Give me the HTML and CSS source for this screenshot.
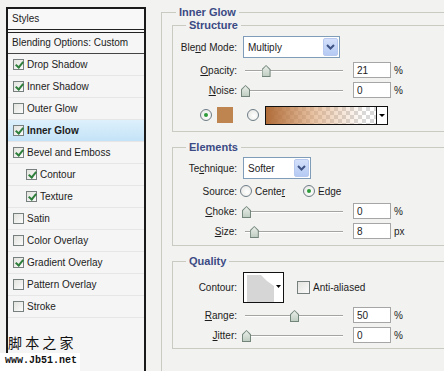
FILE: index.html
```html
<!DOCTYPE html>
<html lang="en">
<head>
    <meta charset="UTF-8">
    <meta name="viewport" content="width=device-width, initial-scale=1.0">
    <title>Layer Style - Inner Glow</title>
    <link rel="stylesheet" href="styles.css">
</head>
<body>

<div class="window">
    <!-- danh sach style ben trai -->
    <div class="styles-panel">
        <div class="panel-head">Styles</div>
        <div class="panel-row">Blending Options: Custom</div>
        <ul class="style-list">
            <li class="style-item"><span class="check on"></span>Drop Shadow</li>
            <li class="style-item"><span class="check on"></span>Inner Shadow</li>
            <li class="style-item"><span class="check"></span>Outer Glow</li>
            <li class="style-item selected"><span class="check on"></span>Inner Glow</li>
            <li class="style-item"><span class="check on"></span>Bevel and Emboss</li>
            <li class="style-item sub"><span class="check on"></span>Contour</li>
            <li class="style-item sub"><span class="check on"></span>Texture</li>
            <li class="style-item"><span class="check"></span>Satin</li>
            <li class="style-item"><span class="check"></span>Color Overlay</li>
            <li class="style-item"><span class="check on"></span>Gradient Overlay</li>
            <li class="style-item"><span class="check"></span>Pattern Overlay</li>
            <li class="style-item"><span class="check"></span>Stroke</li>
        </ul>
    </div>

    <!-- bang tuy chon Inner Glow -->
    <div class="options">
        <fieldset class="group">
            <legend class="group-title">Inner Glow</legend>

            <fieldset class="section structure">
                <legend class="section-title">Structure</legend>
                <div class="field field-tall">
                    <label class="field-label">Ble<u>n</u>d Mode:</label>
                    <div class="select select-blend">
                        <span class="select-value">Multiply</span>
                        <span class="select-btn"><svg width="9" height="6" viewBox="0 0 9 6"><path d="M1 1 L4.5 4.5 L8 1" fill="none" stroke="#3e5486" stroke-width="2"/></svg></span>
                    </div>
                </div>
                <div class="field">
                    <label class="field-label"><u>O</u>pacity:</label>
                    <div class="slider"><span class="thumb" style="left: 21%"></span></div>
                    <input class="num" type="text" value="21">
                    <span class="unit">%</span>
                </div>
                <div class="field">
                    <label class="field-label"><u>N</u>oise:</label>
                    <div class="slider"><span class="thumb" style="left: 0%"></span></div>
                    <input class="num" type="text" value="0">
                    <span class="unit">%</span>
                </div>
                <div class="field field-color">
                    <span class="radio on"></span>
                    <span class="swatch"></span>
                    <span class="radio radio-grad"></span>
                    <div class="gradient">
                        <span class="gradient-fill"></span>
                        <span class="gradient-btn"></span>
                    </div>
                </div>
            </fieldset>

            <fieldset class="section elements">
                <legend class="section-title">Elements</legend>
                <div class="field field-tall">
                    <label class="field-label">Te<u>c</u>hnique:</label>
                    <div class="select select-tech">
                        <span class="select-value">Softer</span>
                        <span class="select-btn"><svg width="9" height="6" viewBox="0 0 9 6"><path d="M1 1 L4.5 4.5 L8 1" fill="none" stroke="#3e5486" stroke-width="2"/></svg></span>
                    </div>
                </div>
                <div class="field field-source">
                    <label class="field-label">Source:</label>
                    <span class="radio"></span>
                    <span class="radio-text">Cente<u>r</u></span>
                    <span class="radio on radio-edge"></span>
                    <span class="radio-text">Edge</span>
                </div>
                <div class="field">
                    <label class="field-label"><u>C</u>hoke:</label>
                    <div class="slider"><span class="thumb" style="left: 1%"></span></div>
                    <input class="num" type="text" value="0">
                    <span class="unit">%</span>
                </div>
                <div class="field">
                    <label class="field-label"><u>S</u>ize:</label>
                    <div class="slider"><span class="thumb" style="left: 9%"></span></div>
                    <input class="num" type="text" value="8">
                    <span class="unit">px</span>
                </div>
            </fieldset>

            <fieldset class="section quality">
                <legend class="section-title">Quality</legend>
                <div class="field field-contour">
                    <label class="field-label">Contour:</label>
                    <div class="contour">
                        <svg width="39" height="29" viewBox="0 0 39 29">
                            <path d="M3 29 L3 2 L17 2 Q22 8 30 13 L30 29 Z" fill="#d6d6d6"/>
                            <path d="M32 12 L37 12 L34.5 15 Z" fill="#000"/>
                        </svg>
                    </div>
                    <span class="check check-big"></span>
                    <span class="check-text">Anti-aliased</span>
                </div>
                <div class="field">
                    <label class="field-label"><u>R</u>ange:</label>
                    <div class="slider"><span class="thumb" style="left: 50%"></span></div>
                    <input class="num" type="text" value="50">
                    <span class="unit">%</span>
                </div>
                <div class="field">
                    <label class="field-label"><u>J</u>itter:</label>
                    <div class="slider"><span class="thumb" style="left: 1%"></span></div>
                    <input class="num" type="text" value="0">
                    <span class="unit">%</span>
                </div>
            </fieldset>
        </fieldset>
    </div>

    <div class="watermark">
        <p class="wm-cn">脚 本 之 家</p>
        <p class="wm-url">www.Jb51.net</p>
    </div>
</div>

</body>
</html>
```

FILE: styles.css
```css
* {
    box-sizing: border-box;
}
body {
    margin: 0;
    background: #f2f2f0;
    font-family: "Liberation Sans", Arial, sans-serif;
    font-size: 10px;
    color: #1c1c1c;
    overflow: hidden;
}
.window {
    position: relative;
    display: flex;
    align-items: flex-start;
    height: 371px;
    padding: 7px 0 0 6px;
}

/* panel trai */
.styles-panel {
    width: 140px;
    height: 380px;
    border: 2px solid #1a1a1a;
    border-bottom: none;
    background: #f5f5f5;
}
.panel-head {
    height: 24px;
    line-height: 20px;
    padding-left: 4px;
    background: #f8f8f8;
    border-bottom: 4px double #222;
}
.panel-row {
    height: 21px;
    line-height: 20px;
    padding-left: 4px;
    border-bottom: 1px solid #444;
    background: #f6f6f6;
}
.style-list {
    list-style: none;
    margin: 0;
    padding: 0;
}
.style-item {
    display: flex;
    align-items: center;
    height: 22px;
    padding-left: 5px;
    border-bottom: 1px solid #e6e6e6;
}
.style-item.sub {
    padding-left: 18px;
}
.style-item.selected {
    background: linear-gradient(#ddf0fc, #c4e3f7);
    font-weight: bold;
}
.check {
    position: relative;
    width: 11px;
    height: 11px;
    margin-right: 3px;
    border: 1px solid #77807f;
    background: linear-gradient(135deg, #e2e2de, #fbfbfb);
}
.check.on::after {
    content: "";
    position: absolute;
    left: 3px;
    top: 0px;
    width: 3px;
    height: 6px;
    border-right: 2px solid #2f7f3c;
    border-bottom: 2px solid #2f7f3c;
    transform: rotate(40deg);
}

/* bang ben phai */
.options {
    flex: 1;
    margin-left: 15px;
    margin-top: -1px;
}
.group {
    margin: 0;
    padding: 0 0 40px 10px;
    min-height: 400px;
    border: 1px solid #cacac2;
    border-right: none;
    border-bottom: none;
}
.group-title,
.section-title {
    padding: 0 3px;
    line-height: 13px;
    font-size: 11px;
    font-weight: bold;
    color: #3b4a84;
}
.group-title {
    margin-left: 4px;
}
.section-title {
    margin-left: 13px;
}
.section {
    margin: 0 0 9px 0;
    padding: 0 0 6px 0;
    border: 1px solid #cacac2;
    border-right: none;
}
.structure {
    padding-top: 4px;
}
.elements {
    padding-top: 3px;
}
.quality {
    padding-top: 4px;
    padding-bottom: 5px;
}
.field {
    display: flex;
    align-items: center;
    height: 16px;
    margin-top: 4px;
}
.field:first-of-type {
    margin-top: 0;
}
.field-tall {
    height: 22px;
}
.field-color {
    height: 20px;
    margin-top: 7px;
}
.field-source {
    margin-top: 4px;
}
.field-contour {
    height: 31px;
}
.field-label {
    width: 64px;
    text-align: right;
    white-space: nowrap;
}

/* select */
.select {
    display: flex;
    align-items: center;
    justify-content: space-between;
    height: 22px;
    margin-left: 6px;
    padding: 1px;
    border: 1px solid #7f9db9;
    background: #fff;
}
.select-blend {
    width: 97px;
}
.select-tech {
    width: 68px;
}
.select-value {
    padding-left: 3px;
}
.select-btn {
    display: flex;
    align-items: center;
    justify-content: center;
    width: 15px;
    height: 18px;
    border: 1px solid #b7c9ef;
    border-radius: 2px;
    background: linear-gradient(#d4e0fb, #b5caf3);
}

/* slider */
.slider {
    position: relative;
    width: 98px;
    height: 16px;
    margin: 0 10px 0 8px;
}
.slider::before {
    content: "";
    position: absolute;
    left: 0;
    right: 0;
    top: 8px;
    border-top: 1px solid #a4a4a0;
    border-bottom: 1px solid #fff;
}
.thumb {
    position: absolute;
    top: 3px;
    width: 9px;
    height: 12px;
    margin-left: -4px;
    background: #72857a;
    clip-path: polygon(50% 0, 100% 35%, 100% 100%, 0 100%, 0 35%);
}
.thumb::before {
    content: "";
    position: absolute;
    inset: 0;
    background: linear-gradient(#eef2ee, #bccbbe);
    clip-path: polygon(50% 9%, 89% 39%, 89% 91%, 11% 91%, 11% 39%);
}
.num {
    width: 38px;
    height: 16px;
    padding: 0 3px;
    border: 1px solid #a6a6a6;
    background: #fff;
    font-family: inherit;
    font-size: 10px;
    color: #222;
}
.unit {
    margin-left: 3px;
}

/* radio */
.radio {
    position: relative;
    width: 12px;
    height: 12px;
    border: 1px solid #6e7c86;
    border-radius: 50%;
    background: radial-gradient(circle at 60% 60%, #fff, #e3e3e0);
}
.radio.on::after {
    content: "";
    position: absolute;
    left: 3px;
    top: 3px;
    width: 4px;
    height: 4px;
    border-radius: 50%;
    background: #2c9a38;
}
.field-color .radio {
    margin-left: 27px;
}
.field-color .radio-grad {
    margin-left: 14px;
}
.swatch {
    width: 16px;
    height: 16px;
    margin-left: 5px;
    background: #bf8550;
}
.gradient {
    display: flex;
    height: 19px;
    margin-left: 6px;
    border: 1px solid #111;
}
.gradient-fill {
    width: 110px;
    background:
        linear-gradient(to right, #b06c38, rgba(220, 160, 110, 0.6) 45%, rgba(230, 190, 160, 0) 90%),
        repeating-conic-gradient(#d9d9d9 0 25%, #fff 0 50%) 0 0 / 8px 8px;
}
.gradient-btn {
    position: relative;
    width: 11px;
    border-left: 1px solid #111;
    background: #fff;
}
.gradient-btn::after {
    content: "";
    position: absolute;
    left: 2px;
    top: 7px;
    border-left: 3px solid transparent;
    border-right: 3px solid transparent;
    border-top: 3px solid #000;
}
.field-source .radio {
    margin-left: 3px;
}
.field-source .radio-edge {
    margin-left: 18px;
}
.radio-text {
    margin-left: 3px;
}

/* contour */
.contour {
    width: 41px;
    height: 31px;
    margin-left: 6px;
    border: 1px solid #111;
    background: #fff;
}
.contour svg {
    display: block;
}
.check-big {
    width: 13px;
    height: 13px;
    margin-left: 13px;
}
.check-text {
    margin-left: 0;
}

/* watermark */
.watermark {
    position: absolute;
    left: 0;
    bottom: 0;
}
.wm-cn {
    margin: 0 0 2px 8px;
    font-family: "Noto Sans CJK SC", sans-serif;
    font-size: 14px;
    line-height: 17px;
    color: #111;
}
.wm-url {
    margin: 0;
    padding: 1px 3px 3px 5px;
    background: #fff;
    font-family: "Liberation Mono", monospace;
    font-size: 10px;
    font-weight: bold;
    line-height: 14px;
    color: #111;
}
```
